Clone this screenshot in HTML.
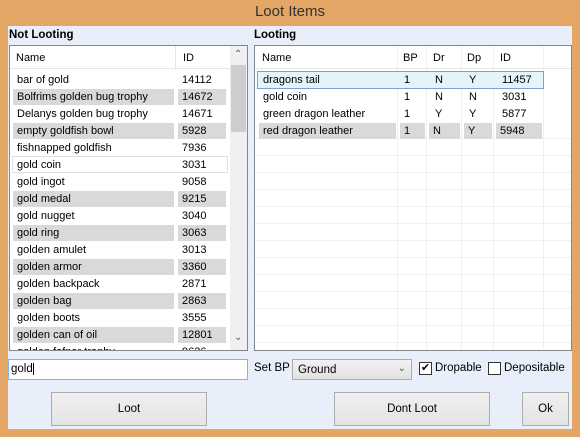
<!DOCTYPE html><html><head><style>
*{margin:0;padding:0;box-sizing:border-box}
body{width:580px;height:437px;background:#E3A665;font-family:"Liberation Sans",sans-serif;font-size:11px;color:#000;position:relative;overflow:hidden}
.title{position:absolute;top:0;left:0;width:580px;height:26px;text-align:center;line-height:24px;font-size:15px;color:#333}
.client{position:absolute;left:8px;top:26px;width:564px;height:403px;background:#E9EFFA}
.a{position:absolute}
.lbl{font-weight:bold;font-size:11.5px}
.box{background:#fff;border:1px solid #828790}
.row{position:absolute;height:17px;line-height:17px;left:0;right:0}
.c{position:absolute;top:1px;height:16px;line-height:16px;padding-left:4px}
.g{background:#D9D9D9}
.btn{position:absolute;background:linear-gradient(#F0F0F0,#E3E3E3);border:1px solid #ADADAD;text-align:center;font-size:11.5px}
.vl{position:absolute;top:0;width:1px;background:#F0F0F0;height:303px}
.hl{position:absolute;left:0;right:0;height:1px;background:#F0F0F0}
</style></head><body>
<div class="title">Loot Items</div>
<div class="client"></div>
<div class="a lbl" style="left:9px;top:29px">Not Looting</div>
<div class="a lbl" style="left:254px;top:29px">Looting</div>

<div class="a box" style="left:9px;top:45px;width:239px;height:306px;overflow:hidden">
 <div class="a" style="left:0;top:0;width:220px;height:23px;border-bottom:1px solid #E5E5E5"></div>
 <div class="a" style="left:165px;top:0;width:1px;height:23px;background:#E5E5E5"></div>
 <div class="a" style="left:6px;top:6px">Name</div>
 <div class="a" style="left:173px;top:6px">ID</div>
 <div class="a" style="left:0;top:25px;width:220px">
  <div class="row" style="top:0"><div class="c" style="left:3px;width:161px">bar of gold</div><div class="c" style="left:168px;width:48px">14112</div></div>
  <div class="row" style="top:17px"><div class="c g" style="left:3px;width:161px">Bolfrims golden bug trophy</div><div class="c g" style="left:168px;width:48px">14672</div></div>
  <div class="row" style="top:34px"><div class="c" style="left:3px;width:161px">Delanys golden bug trophy</div><div class="c" style="left:168px;width:48px">14671</div></div>
  <div class="row" style="top:51px"><div class="c g" style="left:3px;width:161px">empty goldfish bowl</div><div class="c g" style="left:168px;width:48px">5928</div></div>
  <div class="row" style="top:68px"><div class="c" style="left:3px;width:161px">fishnapped goldfish</div><div class="c" style="left:168px;width:48px">7936</div></div>
  <div class="row" style="top:85px;border:1px solid #E0E0E0;left:2px;right:2px"><div class="c" style="left:0;top:0;width:161px">gold coin</div><div class="c" style="left:165px;top:0;width:48px">3031</div></div>
  <div class="row" style="top:102px"><div class="c" style="left:3px;width:161px">gold ingot</div><div class="c" style="left:168px;width:48px">9058</div></div>
  <div class="row" style="top:119px"><div class="c g" style="left:3px;width:161px">gold medal</div><div class="c g" style="left:168px;width:48px">9215</div></div>
  <div class="row" style="top:136px"><div class="c" style="left:3px;width:161px">gold nugget</div><div class="c" style="left:168px;width:48px">3040</div></div>
  <div class="row" style="top:153px"><div class="c g" style="left:3px;width:161px">gold ring</div><div class="c g" style="left:168px;width:48px">3063</div></div>
  <div class="row" style="top:170px"><div class="c" style="left:3px;width:161px">golden amulet</div><div class="c" style="left:168px;width:48px">3013</div></div>
  <div class="row" style="top:187px"><div class="c g" style="left:3px;width:161px">golden armor</div><div class="c g" style="left:168px;width:48px">3360</div></div>
  <div class="row" style="top:204px"><div class="c" style="left:3px;width:161px">golden backpack</div><div class="c" style="left:168px;width:48px">2871</div></div>
  <div class="row" style="top:221px"><div class="c g" style="left:3px;width:161px">golden bag</div><div class="c g" style="left:168px;width:48px">2863</div></div>
  <div class="row" style="top:238px"><div class="c" style="left:3px;width:161px">golden boots</div><div class="c" style="left:168px;width:48px">3555</div></div>
  <div class="row" style="top:255px"><div class="c g" style="left:3px;width:161px">golden can of oil</div><div class="c g" style="left:168px;width:48px">12801</div></div>
  <div class="row" style="top:272px"><div class="c" style="left:3px;width:161px">golden fafnar trophy</div><div class="c" style="left:168px;width:48px">9626</div></div>
 </div>
 <div class="a" style="left:220px;top:0;width:17px;height:304px;background:#F0F0F0"></div>
 <div class="a" style="left:221px;top:19px;width:15px;height:67px;background:#CDCDCD"></div>
 <div class="a" style="left:224px;top:3px;color:#606060;font-size:10px">&#8963;</div>
 <div class="a" style="left:224px;top:286px;color:#606060;font-size:10px">&#8964;</div>
</div>

<div class="a box" style="left:254px;top:45px;width:318px;height:306px;overflow:hidden">
 <div class="a" style="left:0;top:0;right:0;height:23px;border-bottom:1px solid #E5E5E5"></div>
 <div class="vl" style="left:142px"></div><div class="vl" style="left:171px"></div><div class="vl" style="left:206px"></div><div class="vl" style="left:238px"></div><div class="vl" style="left:288px"></div>
 <div class="hl" style="top:92px"></div><div class="hl" style="top:109px"></div><div class="hl" style="top:126px"></div><div class="hl" style="top:143px"></div><div class="hl" style="top:160px"></div><div class="hl" style="top:177px"></div><div class="hl" style="top:194px"></div><div class="hl" style="top:211px"></div><div class="hl" style="top:228px"></div><div class="hl" style="top:245px"></div><div class="hl" style="top:262px"></div><div class="hl" style="top:279px"></div><div class="hl" style="top:296px"></div>
 <div class="a" style="left:7px;top:6px">Name</div><div class="a" style="left:148px;top:6px">BP</div><div class="a" style="left:178px;top:6px">Dr</div><div class="a" style="left:212px;top:6px">Dp</div><div class="a" style="left:245px;top:6px">ID</div>
 <div class="a" style="left:2px;top:25px;width:287px;height:18px;background:#E5F3FB;border:1px solid #7DA2CE"></div>
 <div class="a" style="left:0;top:25px;width:320px">
  <div class="row" style="top:0"><div class="c" style="left:4px">dragons tail</div><div class="c" style="left:145px">1</div><div class="c" style="left:176px">N</div><div class="c" style="left:210px">Y</div><div class="c" style="left:243px">11457</div></div>
  <div class="row" style="top:17px"><div class="c" style="left:4px">gold coin</div><div class="c" style="left:145px">1</div><div class="c" style="left:176px">N</div><div class="c" style="left:210px">N</div><div class="c" style="left:243px">3031</div></div>
  <div class="row" style="top:34px"><div class="c" style="left:4px">green dragon leather</div><div class="c" style="left:145px">1</div><div class="c" style="left:176px">Y</div><div class="c" style="left:210px">Y</div><div class="c" style="left:243px">5877</div></div>
  <div class="row" style="top:51px"><div class="c g" style="left:4px;width:137px">red dragon leather</div><div class="c g" style="left:145px;width:25px">1</div><div class="c g" style="left:174px;width:31px">N</div><div class="c g" style="left:209px;width:28px">Y</div><div class="c g" style="left:241px;width:46px">5948</div></div>
 </div>
</div>

<div class="a" style="left:8px;top:359px;width:240px;height:21px;background:#fff;border:1px solid #7EB4EA;padding:3px 2px;font-size:11.5px">gold<span style="border-left:1px solid #000;margin-left:0">&nbsp;</span></div>
<div class="a" style="left:254px;top:362px;font-size:11.5px">Set BP</div>
<div class="a" style="left:292px;top:359px;width:120px;height:21px;background:linear-gradient(#F2F2F2,#E2E2E2);border:1px solid #ACACAC;padding:4px 5px;font-size:11.5px">Ground<span style="position:absolute;right:5px;top:3px;color:#555;font-size:10px">&#8964;</span></div>
<div class="a" style="left:419px;top:362px;width:13px;height:13px;background:#fff;border:1px solid #333;font-size:11px;line-height:11px;text-align:center">&#10004;</div>
<div class="a" style="left:435px;top:362px;font-size:11.5px">Dropable</div>
<div class="a" style="left:488px;top:362px;width:13px;height:13px;background:#fff;border:1px solid #333"></div>
<div class="a" style="left:504px;top:362px;font-size:11.5px">Depositable</div>

<div class="btn" style="left:51px;top:392px;width:156px;height:34px;line-height:32px">Loot</div>
<div class="btn" style="left:334px;top:392px;width:156px;height:34px;line-height:32px">Dont Loot</div>
<div class="btn" style="left:522px;top:392px;width:47px;height:34px;line-height:32px">Ok</div>
</body></html>
